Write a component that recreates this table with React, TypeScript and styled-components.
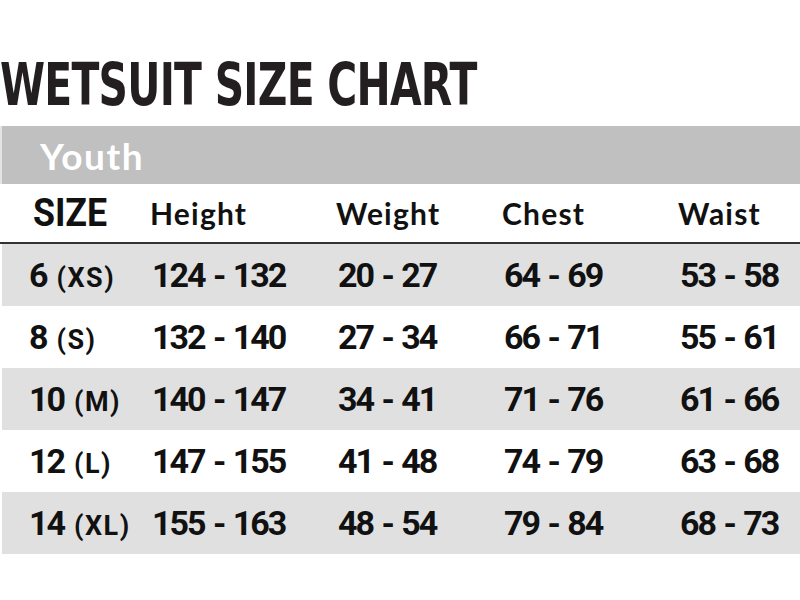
import styled, { createGlobalStyle } from 'styled-components';

interface SizeRow {
  size: string;
  label: string;
  height: string;
  weight: string;
  chest: string;
  waist: string;
}

const rows: SizeRow[] = [
  { size: '6', label: '(XS)', height: '124 - 132', weight: '20 - 27', chest: '64 - 69', waist: '53 - 58' },
  { size: '8', label: '(S)', height: '132 - 140', weight: '27 - 34', chest: '66 - 71', waist: '55 - 61' },
  { size: '10', label: '(M)', height: '140 - 147', weight: '34 - 41', chest: '71 - 76', waist: '61 - 66' },
  { size: '12', label: '(L)', height: '147 - 155', weight: '41 - 48', chest: '74 - 79', waist: '63 - 68' },
  { size: '14', label: '(XL)', height: '155 - 163', weight: '48 - 54', chest: '79 - 84', waist: '68 - 73' },
];

const GlobalStyle = createGlobalStyle`
  html, body {
    margin: 0;
    padding: 0;
    background: #ffffff;
  }
`;

const App = () => (
  <>
    <GlobalStyle />
    <Page>
      <Title>WETSUIT SIZE CHART</Title>
      <GroupBar>Youth</GroupBar>
      <HeaderRow>
        <SizeHead>SIZE</SizeHead>
        <HeadCell>Height</HeadCell>
        <HeadCell>Weight</HeadCell>
        <HeadCell>Chest</HeadCell>
        <HeadCell>Waist</HeadCell>
      </HeaderRow>
      {rows.map((row, i) => (
        <DataRow key={row.size} $shaded={i % 2 === 0}>
          <SizeCell>
            {row.size}
            <SizeLabel>{row.label}</SizeLabel>
          </SizeCell>
          <ValueCell>{row.height}</ValueCell>
          <ValueCell>{row.weight}</ValueCell>
          <ValueCell>{row.chest}</ValueCell>
          <ValueCell>{row.waist}</ValueCell>
        </DataRow>
      ))}
    </Page>
  </>
);

const columns = '150px 186px 166px 176px 1fr';

const Page = styled.div({
  width: '800px',
  height: '600px',
  background: '#ffffff',
  color: '#111111',
  overflow: 'hidden',
});

// condensed heavy display face, squeezed horizontally to match the poster lettering
const Title = styled.h1({
  margin: 0,
  padding: '55px 0 0 0',
  height: '74px',
  boxSizing: 'border-box',
  fontFamily: '"DejaVu Sans Condensed", "DejaVu Sans", sans-serif',
  fontWeight: 700,
  fontSize: '59px',
  lineHeight: '59px',
  letterSpacing: '-1px',
  color: '#231f20',
  whiteSpace: 'nowrap',
  transformOrigin: 'left center',
  transform: 'scaleX(0.77)',
});

const GroupBar = styled.div({
  height: '58px',
  marginTop: '52px',
  paddingLeft: '38px',
  display: 'flex',
  alignItems: 'center',
  background: '#c0c0c0',
  borderLeft: '2px solid #e4e4e4',
  color: '#ffffff',
  fontFamily: 'Lato, "Liberation Sans", sans-serif',
  fontWeight: 700,
  fontSize: '37px',
  letterSpacing: '1.5px',
});

const HeaderRow = styled.div({
  display: 'grid',
  gridTemplateColumns: columns,
  alignItems: 'center',
  height: '58px',
  borderBottom: '2px solid #333333',
  fontFamily: 'Lato, "Liberation Sans", sans-serif',
  fontWeight: 700,
});

const SizeHead = styled.div({
  paddingLeft: '35px',
  fontFamily: 'Roboto, "Liberation Sans", sans-serif',
  fontSize: '38px',
  fontWeight: 700,
  transformOrigin: 'left center',
  transform: 'scaleX(0.94)',
});

const HeadCell = styled.div({
  fontSize: '30px',
  letterSpacing: '1.2px',
});

const DataRow = styled.div<{ $shaded: boolean }>((props) => ({
  display: 'grid',
  gridTemplateColumns: columns,
  alignItems: 'center',
  height: '62px',
  marginLeft: '2px',
  background: props.$shaded ? '#e0e0e0' : '#ffffff',
  fontFamily: 'Roboto, "Liberation Sans", sans-serif',
  fontWeight: 700,
  fontSize: '34px',
  letterSpacing: '-2px',
  wordSpacing: '2px',
  color: '#111111',
}));

const SizeCell = styled.div({
  paddingLeft: '27px',
  whiteSpace: 'nowrap',
});

const SizeLabel = styled.span({
  marginLeft: '10px',
  fontSize: '27px',
  letterSpacing: '1.5px',
});

const ValueCell = styled.div({
  whiteSpace: 'nowrap',
});

export default App;
